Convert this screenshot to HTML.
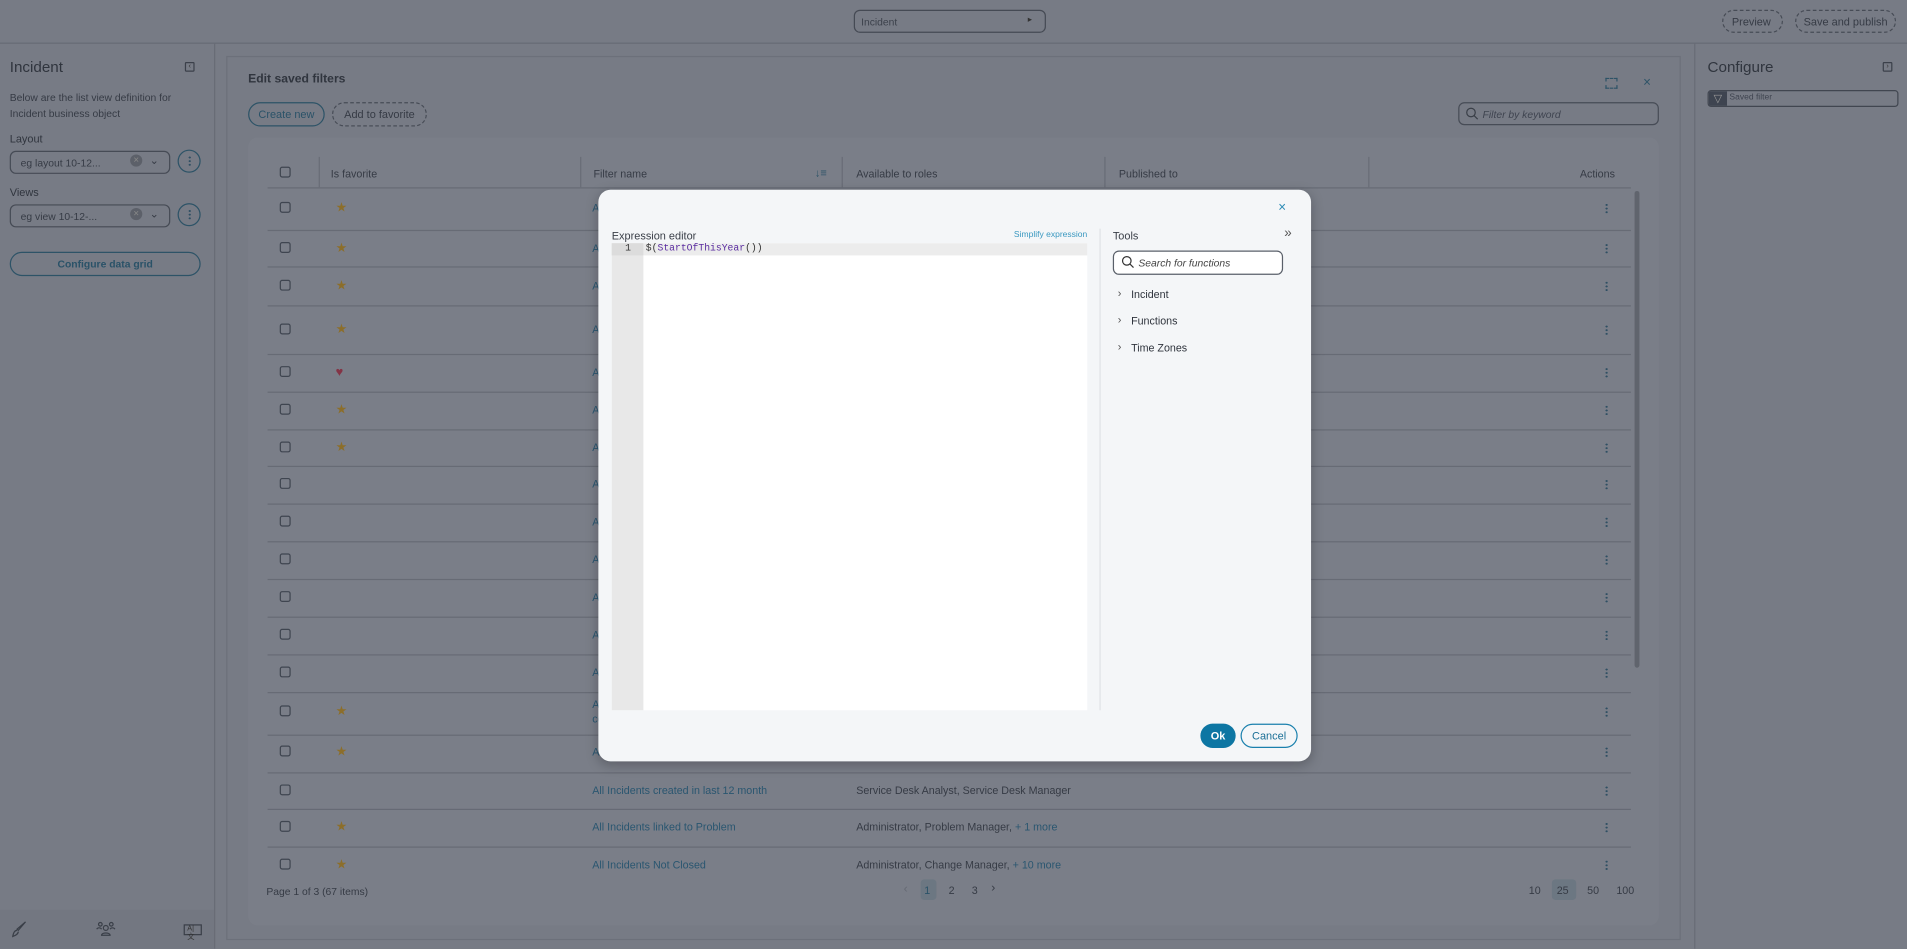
<!DOCTYPE html>
<html><head><meta charset="utf-8"><style>
*{box-sizing:border-box;margin:0;padding:0}
html,body{width:1907px;height:949px;overflow:hidden;background:#777b85}
body{font-family:"Liberation Sans",sans-serif;color:#363b45}
#w{position:absolute;left:0;top:0;width:1568px;height:780px;transform:scale(1.21620);transform-origin:0 0;background:#777b85}
.a{position:absolute}
.t{position:absolute;white-space:nowrap;font-size:8.8px;line-height:12px}
.cb{position:absolute;width:9px;height:9px;border:1px solid #3f4550;border-radius:2px}
.ln{position:absolute;left:220px;width:1121px;height:1px;background:#676b75}
.keb{position:absolute;width:2px;height:9px;background:radial-gradient(circle,#2f4f63 45%,transparent 50%) 0 0/2px 3px}
.star{position:absolute;color:#8c6e2a;font-size:10.5px;line-height:12px}
.lk{color:#2a5670}
</style></head><body><div id="w">
<div class="a" style="left:0;top:0;width:1568px;height:36px;border-bottom:1px solid #666a74"></div>
<div class="a" style="left:702px;top:8px;width:158px;height:19px;border:1px solid #454a54;border-radius:5px"></div>
<div class="t" style="left:708px;top:12px;font-size:8.5px;color:#3c414b">Incident</div>
<div class="t" style="left:845px;top:11px;font-size:7px;color:#333">&#9656;</div>
<div class="a" style="left:1416px;top:8px;width:50px;height:19px;border:1px dashed #474c56;border-radius:10px"></div>
<div class="t" style="left:1424px;top:12px;font-size:9px">Preview</div>
<div class="a" style="left:1476px;top:8px;width:83px;height:19px;border:1px dashed #474c56;border-radius:10px"></div>
<div class="t" style="left:1483px;top:12px;font-size:9px">Save and publish</div>
<div class="a" style="left:176px;top:36px;width:1px;height:744px;background:#686c76"></div>
<div class="a" style="left:0;top:748px;width:176px;height:32px;background:#737781"></div>
<div class="t" style="left:8px;top:48px;font-size:12.5px;line-height:15px;color:#30353e">Incident</div>
<div class="a" style="left:152px;top:51px;width:8px;height:8px;border:1px solid #3b404a;border-radius:1px;font-size:6px;line-height:6px;text-align:center;color:#333">&lsaquo;</div>
<div class="t" style="left:8px;top:74px;font-size:8.5px;line-height:13px">Below are the list view definition for<br>Incident business object</div>
<div class="t" style="left:8px;top:108px;font-size:9px;color:#30353e">Layout</div>
<div class="a" style="left:8px;top:124px;width:132px;height:19px;border:1px solid #464b55;border-radius:5px"></div>
<div class="t" style="left:17px;top:128px;font-size:8.5px">eg layout 10-12...</div>
<div class="a" style="left:107px;top:127px;width:10px;height:10px;border-radius:50%;background:#5c6069;color:#888;font-size:8px;line-height:10px;text-align:center">&times;</div>
<div class="t" style="left:123px;top:126px;font-size:9px">&#8964;</div>
<div class="a" style="left:146px;top:123px;width:19px;height:19px;border:1px solid #2d5367;border-radius:50%"></div>
<div class="keb" style="left:155px;top:128px"></div>
<div class="t" style="left:8px;top:152px;font-size:9px;color:#30353e">Views</div>
<div class="a" style="left:8px;top:168px;width:132px;height:19px;border:1px solid #464b55;border-radius:5px"></div>
<div class="t" style="left:17px;top:172px;font-size:8.5px">eg view 10-12-...</div>
<div class="a" style="left:107px;top:171px;width:10px;height:10px;border-radius:50%;background:#5c6069;color:#888;font-size:8px;line-height:10px;text-align:center">&times;</div>
<div class="t" style="left:123px;top:170px;font-size:9px">&#8964;</div>
<div class="a" style="left:146px;top:167px;width:19px;height:19px;border:1px solid #2d5367;border-radius:50%"></div>
<div class="keb" style="left:155px;top:172px"></div>
<div class="a" style="left:8px;top:207px;width:157px;height:20px;border:1px solid #2d5367;border-radius:10px"></div>
<div class="t" style="left:8px;top:211px;width:157px;text-align:center;font-size:8.5px;color:#2a5268;font-weight:bold">Configure data grid</div>
<svg class="a" style="left:9px;top:757px" width="14" height="14" viewBox="0 0 14 14" fill="none" stroke="#3a3f48" stroke-width="1"><path d="M12 1 L6 8 L5 7 Z M5 8 C3 8 2 10 1.5 13 C4 12 6 11 6 9"/></svg>
<svg class="a" style="left:79px;top:757px" width="16" height="13" viewBox="0 0 16 13" fill="none" stroke="#3a3f48" stroke-width="1"><circle cx="8" cy="6" r="2"/><path d="M4.5 12c0-2.5 7-2.5 7 0z"/><circle cx="3.5" cy="3" r="1.5"/><circle cx="12.5" cy="3" r="1.5"/><path d="M0.5 7c1-1.5 3-1.5 4 0M11.5 7c1-1.5 3-1.5 4 0"/></svg>
<div class="a" style="left:151px;top:760px;width:15px;height:9px;border:1px solid #3a3f48;font-size:6px;line-height:7px;color:#333;padding-left:2px">A|文</div>
<div class="a" style="left:186px;top:46px;width:1196px;height:727px;border:1px solid #6c707a"></div>
<div class="t" style="left:204px;top:60px;font-size:10px;color:#30353e;font-weight:bold">Edit saved filters</div>
<div class="a" style="left:1320px;top:64px;width:10px;height:9px;border:1.5px dashed #2d5367"></div>
<div class="t" style="left:1351px;top:62px;font-size:11px;color:#2d5367">&times;</div>
<div class="a" style="left:204px;top:84px;width:63px;height:20px;border:1px solid #2d5367;border-radius:10px"></div>
<div class="t" style="left:204px;top:88px;width:63px;text-align:center;font-size:9px;color:#2a5268">Create new</div>
<div class="a" style="left:273px;top:84px;width:78px;height:20px;border:1px dashed #474c56;border-radius:10px"></div>
<div class="t" style="left:273px;top:88px;width:78px;text-align:center;font-size:9px">Add to favorite</div>
<div class="a" style="left:1199px;top:84px;width:165px;height:19px;border:1px solid #474c56;border-radius:5px"></div>
<svg class="a" style="left:1205px;top:88px" width="11" height="11" viewBox="0 0 11 11" fill="none" stroke="#3a3f48" stroke-width="1"><circle cx="4.5" cy="4.5" r="3.5"/><path d="M7 7l3 3"/></svg>
<div class="t" style="left:1219px;top:88px;font-size:8.5px;font-style:italic;color:#3f4450">Filter by keyword</div>
<div class="a" style="left:204px;top:113px;width:1160px;height:648px;background:#7a7e88;border-radius:8px"></div>
<div class="cb" style="left:230px;top:137px"></div>
<div class="a" style="left:262px;top:129px;width:1px;height:25px;background:#686c76"></div>
<div class="a" style="left:477px;top:129px;width:1px;height:25px;background:#686c76"></div>
<div class="a" style="left:692px;top:129px;width:1px;height:25px;background:#686c76"></div>
<div class="a" style="left:908px;top:129px;width:1px;height:25px;background:#686c76"></div>
<div class="a" style="left:1125px;top:129px;width:1px;height:25px;background:#686c76"></div>
<div class="t" style="left:272px;top:137px">Is favorite</div>
<div class="t" style="left:488px;top:137px">Filter name</div>
<div class="t" style="left:670px;top:136px;font-size:9px;color:#2d5367">&#8595;&#8801;</div>
<div class="t" style="left:704px;top:137px">Available to roles</div>
<div class="t" style="left:920px;top:137px">Published to</div>
<div class="t" style="left:1299px;top:137px">Actions</div>
<div class="ln" style="top:154px"></div>
<div class="ln" style="top:189px"></div><div class="ln" style="top:219px"></div><div class="ln" style="top:251px"></div><div class="ln" style="top:291px"></div><div class="ln" style="top:322px"></div><div class="ln" style="top:353px"></div><div class="ln" style="top:383px"></div><div class="ln" style="top:414px"></div><div class="ln" style="top:445px"></div><div class="ln" style="top:476px"></div><div class="ln" style="top:507px"></div><div class="ln" style="top:538px"></div><div class="ln" style="top:569px"></div><div class="ln" style="top:604px"></div><div class="ln" style="top:635px"></div><div class="ln" style="top:665px"></div><div class="ln" style="top:696px"></div>
<div class="a" style="left:1344px;top:157px;width:4px;height:392px;background:#60646d;border-radius:2px"></div>
<div class="cb" style="left:230px;top:166px"></div><div class="star" style="left:276px;top:165px">&#9733;</div><div class="t lk" style="left:487px;top:165px">All</div><div class="keb" style="left:1320px;top:167px"></div>
<div class="cb" style="left:230px;top:199px"></div><div class="star" style="left:276px;top:198px">&#9733;</div><div class="t lk" style="left:487px;top:198px">All</div><div class="keb" style="left:1320px;top:200px"></div>
<div class="cb" style="left:230px;top:230px"></div><div class="star" style="left:276px;top:229px">&#9733;</div><div class="t lk" style="left:487px;top:229px">All</div><div class="keb" style="left:1320px;top:231px"></div>
<div class="cb" style="left:230px;top:266px"></div><div class="star" style="left:276px;top:265px">&#9733;</div><div class="t lk" style="left:487px;top:265px">All</div><div class="keb" style="left:1320px;top:267px"></div>
<div class="cb" style="left:230px;top:301px"></div><div class="star" style="left:276px;top:300px;color:#843446">&#9829;</div><div class="t lk" style="left:487px;top:300px">All</div><div class="keb" style="left:1320px;top:302px"></div>
<div class="cb" style="left:230px;top:332px"></div><div class="star" style="left:276px;top:331px">&#9733;</div><div class="t lk" style="left:487px;top:331px">All</div><div class="keb" style="left:1320px;top:333px"></div>
<div class="cb" style="left:230px;top:363px"></div><div class="star" style="left:276px;top:362px">&#9733;</div><div class="t lk" style="left:487px;top:362px">All</div><div class="keb" style="left:1320px;top:364px"></div>
<div class="cb" style="left:230px;top:393px"></div><div class="t lk" style="left:487px;top:392px">All</div><div class="keb" style="left:1320px;top:394px"></div>
<div class="cb" style="left:230px;top:424px"></div><div class="t lk" style="left:487px;top:423px">All</div><div class="keb" style="left:1320px;top:425px"></div>
<div class="cb" style="left:230px;top:455px"></div><div class="t lk" style="left:487px;top:454px">All</div><div class="keb" style="left:1320px;top:456px"></div>
<div class="cb" style="left:230px;top:486px"></div><div class="t lk" style="left:487px;top:485px">All</div><div class="keb" style="left:1320px;top:487px"></div>
<div class="cb" style="left:230px;top:517px"></div><div class="t lk" style="left:487px;top:516px">All</div><div class="keb" style="left:1320px;top:518px"></div>
<div class="cb" style="left:230px;top:548px"></div><div class="t lk" style="left:487px;top:547px">All</div><div class="keb" style="left:1320px;top:549px"></div>
<div class="cb" style="left:230px;top:580px"></div><div class="star" style="left:276px;top:579px">&#9733;</div><div class="t lk" style="left:487px;top:573px">All<br>co</div><div class="keb" style="left:1320px;top:581px"></div>
<div class="cb" style="left:230px;top:613px"></div><div class="star" style="left:276px;top:612px">&#9733;</div><div class="t lk" style="left:487px;top:612px">All</div><div class="keb" style="left:1320px;top:614px"></div>
<div class="cb" style="left:230px;top:645px"></div><div class="t lk" style="left:487px;top:644px">All Incidents created in last 12 month</div><div class="t" style="left:704px;top:644px">Service Desk Analyst, Service Desk Manager</div><div class="keb" style="left:1320px;top:646px"></div>
<div class="cb" style="left:230px;top:675px"></div><div class="star" style="left:276px;top:674px">&#9733;</div><div class="t lk" style="left:487px;top:674px">All Incidents linked to Problem</div><div class="t" style="left:704px;top:674px">Administrator, Problem Manager, <span class="lk">+ 1 more</span></div><div class="keb" style="left:1320px;top:676px"></div>
<div class="a" style="left:220px;top:700px;width:1121px;height:16px;overflow:hidden">
<div class="cb" style="left:10px;top:6px"></div><div class="star" style="left:56px;top:5px">&#9733;</div><div class="t lk" style="left:267px;top:5px">All Incidents Not Closed</div><div class="t" style="left:484px;top:5px">Administrator, Change Manager, <span class="lk">+ 10 more</span></div><div class="keb" style="left:1100px;top:7px"></div></div>
<div class="t" style="left:219px;top:727px;font-size:8.5px">Page 1 of 3 (67 items)</div>
<div class="t" style="left:743px;top:726px;font-size:10px;color:#666a74">&lsaquo;</div>
<div class="a" style="left:757px;top:723px;width:13px;height:17px;background:#6c7782;border-radius:3px"></div>
<div class="t" style="left:760px;top:726px;color:#2a5268">1</div>
<div class="t" style="left:780px;top:726px">2</div>
<div class="t" style="left:799px;top:726px">3</div>
<div class="t" style="left:815px;top:725px;font-size:10px">&rsaquo;</div>
<div class="t" style="left:1257px;top:726px">10</div>
<div class="a" style="left:1276px;top:723px;width:20px;height:17px;background:#6c7782;border-radius:3px"></div>
<div class="t" style="left:1280px;top:726px">25</div>
<div class="t" style="left:1305px;top:726px">50</div>
<div class="t" style="left:1329px;top:726px">100</div>
<div class="a" style="left:1393px;top:36px;width:1px;height:744px;background:#686c76"></div>
<div class="t" style="left:1404px;top:48px;font-size:12.5px;line-height:15px;color:#30353e">Configure</div>
<div class="a" style="left:1548px;top:51px;width:8px;height:8px;border:1px solid #3b404a;border-radius:1px;font-size:6px;line-height:6px;text-align:center;color:#333">&rsaquo;</div>
<div class="a" style="left:1404px;top:74px;width:157px;height:14px;border:1px solid #414650;border-radius:3px;overflow:hidden"><div class="a" style="left:0;top:0;width:15px;height:14px;background:#3e4450;color:#999;font-size:9px;line-height:12px;text-align:center">&#9661;</div></div>
<div class="t" style="left:1422px;top:76px;font-size:7px;line-height:10px;color:#3f4450">Saved filter</div>
<div class="a" style="left:492px;top:156px;width:586px;height:470px;background:#f4f6f8;border-radius:10px;box-shadow:0 3px 10px rgba(0,0,0,.25)"></div>
<div class="t" style="left:1051px;top:165px;font-size:11px;color:#2a8ab5">&times;</div>
<div class="t" style="left:503px;top:188px;font-size:9px;color:#3a3f48">Expression editor</div>
<div class="t" style="left:800px;top:188px;width:94px;text-align:right;font-size:7px;color:#3a98c0">Simplify expression</div>
<div class="a" style="left:503px;top:200px;width:391px;height:384px;background:#fff"></div>
<div class="a" style="left:503px;top:200px;width:26px;height:384px;background:#e8e8e8"></div>
<div class="a" style="left:503px;top:200px;width:391px;height:10px;background:#ececec"></div>
<div class="a" style="left:503px;top:200px;width:26px;height:10px;background:#dcdcdc"></div>
<div class="t" style="left:514px;top:199px;font-family:'Liberation Mono',monospace;font-size:8px;line-height:11px;color:#333">1</div>
<div class="t" style="left:531px;top:199px;font-family:'Liberation Mono',monospace;font-size:8px;line-height:11px;color:#333">$(<span style="color:#5a2ca0">StartOfThisYear</span>())</div>
<div class="a" style="left:904px;top:188px;width:1px;height:396px;background:#e0e2e6"></div>
<div class="t" style="left:915px;top:188px;font-size:9px;color:#3a3f48">Tools</div>
<div class="t" style="left:1056px;top:186px;font-size:11px;color:#555">&raquo;</div>
<div class="a" style="left:915px;top:206px;width:140px;height:20px;border:1px solid #5a606a;border-radius:5px;background:#fff"></div>
<svg class="a" style="left:922px;top:210px" width="11" height="11" viewBox="0 0 11 11" fill="none" stroke="#333" stroke-width="1"><circle cx="4.5" cy="4.5" r="3.5"/><path d="M7 7l3 3"/></svg>
<div class="t" style="left:936px;top:210px;font-size:8.5px;font-style:italic;color:#444">Search for functions</div>
<div class="t" style="left:919px;top:235px;font-size:9px;color:#555">&rsaquo;</div><div class="t" style="left:930px;top:236px;color:#2f343d">Incident</div>
<div class="t" style="left:919px;top:257px;font-size:9px;color:#555">&rsaquo;</div><div class="t" style="left:930px;top:258px;color:#2f343d">Functions</div>
<div class="t" style="left:919px;top:279px;font-size:9px;color:#555">&rsaquo;</div><div class="t" style="left:930px;top:280px;color:#2f343d">Time Zones</div>
<div class="a" style="left:987px;top:595px;width:29px;height:20px;background:#0d76a3;border-radius:10px"></div>
<div class="t" style="left:987px;top:599px;width:29px;text-align:center;color:#fff;font-weight:bold;font-size:9px">Ok</div>
<div class="a" style="left:1020px;top:595px;width:47px;height:20px;border:1px solid #1a80ad;border-radius:10px"></div>
<div class="t" style="left:1020px;top:599px;width:47px;text-align:center;color:#1a6f96;font-size:9px">Cancel</div>
</div></body></html>
